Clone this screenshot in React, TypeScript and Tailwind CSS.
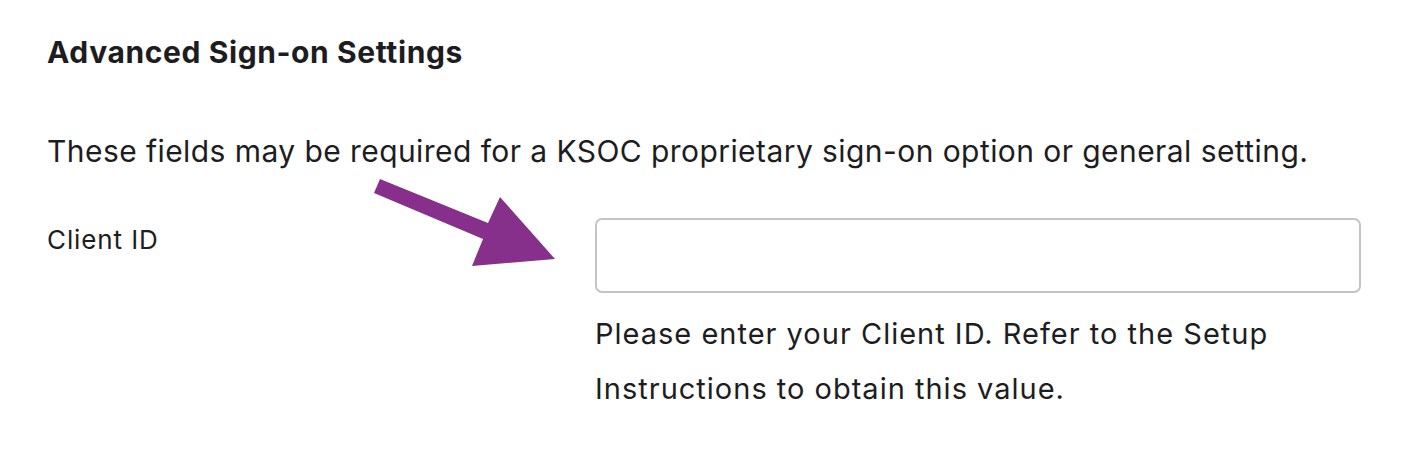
export default function App() {
  return (
    <div
      className="relative h-[454px] w-[1404px] overflow-hidden bg-white text-[#1d1d21]"
      style={{ fontFamily: "Inter, 'Noto Sans', sans-serif" }}
    >
      <div className="pl-[47px] pt-[34px]">
        <h2 className="text-[30px] font-bold leading-[36px] tracking-[0.6px]">Advanced Sign-on Settings</h2>
        <p className="mt-[63px] text-[30px] leading-[36px] tracking-[0.43px]">
          These fields may be required for a KSOC proprietary sign-on option or general setting.
        </p>
        <div className="mt-[49px] flex">
          <label className="mt-[6px] w-[548px] shrink-0 text-[26px] leading-[32px] tracking-[0.9px]">Client ID</label>
          <div className="flex w-[766px] flex-col">
            <input
              type="text"
              className="h-[75px] w-full rounded-[7px] border-2 border-[#c3c3c8] bg-white px-4 outline-none"
            />
            <p className="mt-[13px] text-[29px] leading-[55px] tracking-[1px]">
              Please enter your Client ID. Refer to the Setup
              <br />
              Instructions to obtain this value.
            </p>
          </div>
        </div>
      </div>
      <svg
        className="pointer-events-none absolute left-0 top-0"
        width="1404"
        height="454"
        viewBox="0 0 1404 454"
      >
        <polygon
          points="380,179 488,223 500,197 555,259 472,266 483,239 374,193"
          fill="#86308c"
        />
      </svg>
    </div>
  );
}
